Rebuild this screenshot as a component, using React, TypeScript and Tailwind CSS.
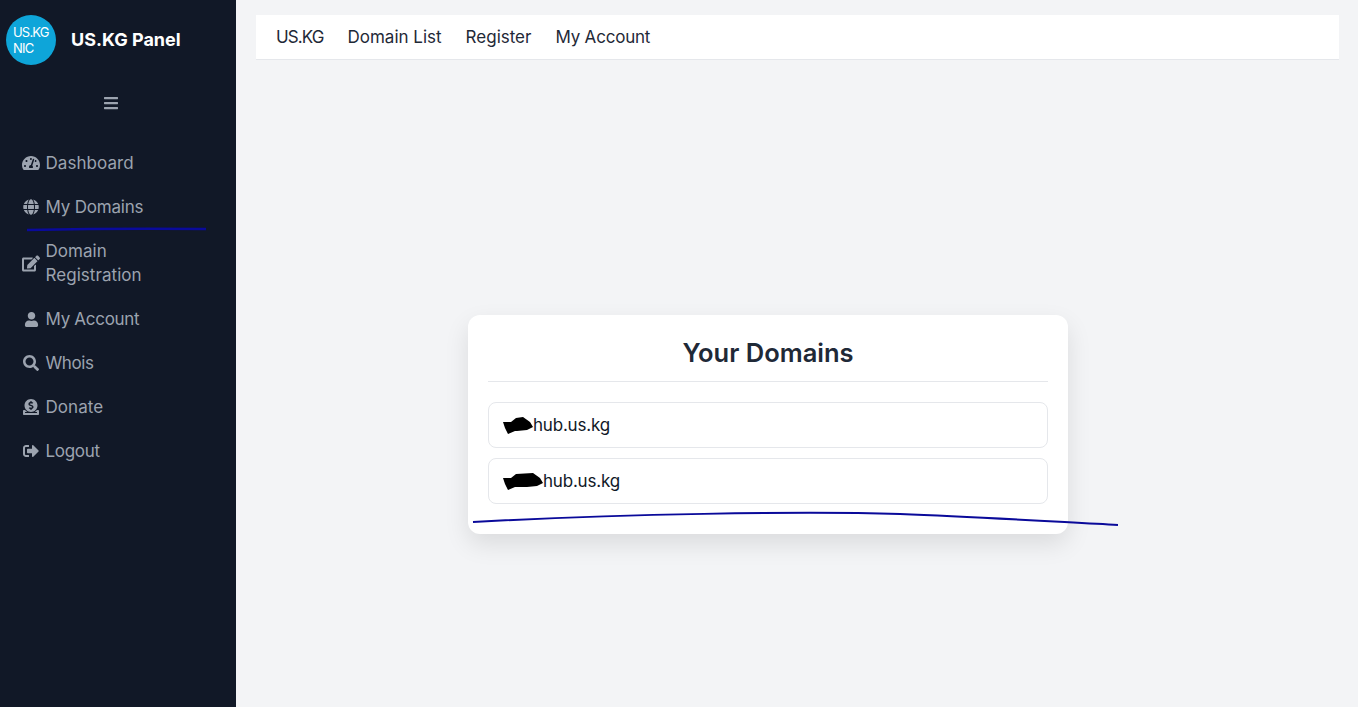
import type { ReactNode } from "react";
import {
  FaBars,
  FaDonate,
  FaEdit,
  FaGlobe,
  FaSearch,
  FaSignOutAlt,
  FaTachometerAlt,
  FaUser,
} from "react-icons/fa";

const MENU: { label: ReactNode; icon: ReactNode; className: string }[] = [
  { label: "Dashboard", icon: <FaTachometerAlt size={18} />, className: "tracking-[0.05px]" },
  { label: "My Domains", icon: <FaGlobe size={16} />, className: "tracking-[-0.2px]" },
  {
    label: (
      <>
        Domain
        <br />
        Registration
      </>
    ),
    icon: <FaEdit size={19} />,
    className: "tracking-[0.05px]",
  },
  { label: "My Account", icon: <FaUser size={15} />, className: "tracking-[-0.3px]" },
  { label: "Whois", icon: <FaSearch size={16} />, className: "tracking-[-0.4px]" },
  { label: "Donate", icon: <FaDonate size={16} />, className: "tracking-[0.05px]" },
  { label: "Logout", icon: <FaSignOutAlt size={16} />, className: "tracking-[-0.3px]" },
];

const TOP_LINKS = [
  { label: "US.KG", className: "tracking-[-0.9px]" },
  { label: "Domain List", className: "" },
  { label: "Register", className: "" },
  { label: "My Account", className: "tracking-[-0.2px]" },
];

function Sidebar() {
  return (
    <aside className="flex h-[707px] w-[236px] shrink-0 flex-col bg-[#111827]">
      <div className="flex items-center gap-[15px] pl-1.5 pt-[15px]">
        <div className="flex h-[50px] w-[50px] items-center rounded-full bg-[#0ea5d9] pl-[7px] text-[13px] leading-4 tracking-[-0.8px] text-white">
          US.KG
          <br />
          NIC
        </div>
        <span className="-translate-y-px text-[18px] font-bold text-white">US.KG Panel</span>
      </div>
      <div className="mt-[30px] flex justify-center pr-[14px] text-[#9ca3af]">
        <FaBars size={16} />
      </div>
      <nav className="mt-10 flex flex-col gap-5 pl-[22px]">
        {MENU.map((item, i) => (
          <div key={i} className={`flex items-center text-[17px] leading-6 text-[#9ca3af] ${item.className}`}>
            <span className="flex w-[18px] justify-center">{item.icon}</span>
            <span className="ml-[5.5px]">{item.label}</span>
          </div>
        ))}
      </nav>
    </aside>
  );
}

function Scribble({ width }: { width: number }) {
  return (
    <svg className="absolute left-[14px] top-[14px]" width={width} height={17} viewBox={`0 0 ${width} 17`}>
      <path
        d={`M0 5 L8 5 L13 1 L${width - 10} 0 L${width - 3} 5 L${width} 10 L${width - 6} 13 L${width - 16} 14 L12 14 L5 17 L2 11 Z`}
        fill="#000"
      />
    </svg>
  );
}

function DomainRow({ name, scribble }: { name: string; scribble: number }) {
  return (
    <div
      className="relative flex h-[46px] items-center rounded-lg border border-[#e5e7eb] bg-white pt-px text-[17px] tracking-[-0.2px] text-[#111827]"
      style={{ paddingLeft: 14 + scribble }}
    >
      {name}
      <Scribble width={scribble} />
    </div>
  );
}

export default function App() {
  return (
    <div className="relative flex h-[707px] w-[1358px] overflow-hidden bg-[#f3f4f6] font-['Inter','Noto_Sans',sans-serif]">
      <Sidebar />
      <main className="flex-1 pl-5 pr-[19px] pt-[15px]">
        <div className="flex h-[45px] items-center gap-6 border-b border-[#e5e7eb] bg-white pl-5 pt-0.5 text-[17px] text-[#1f2937]">
          {TOP_LINKS.map((link) => (
            <span key={link.label} className={link.className}>
              {link.label}
            </span>
          ))}
        </div>
        <div className="flex w-[1024px] justify-center pt-[255px]">
          <div className="h-[219px] w-[600px] rounded-xl bg-white p-5 shadow-[0_10px_25px_rgba(0,0,0,0.1)]">
            <h1 className="border-b border-[#e5e7eb] pt-0.5 pb-3 text-center text-[25.5px] leading-8 font-semibold text-[#1f2937]">
              Your Domains
            </h1>
            <div className="mt-5 flex flex-col gap-[10px]">
              <DomainRow name="hub.us.kg" scribble={30} />
              <DomainRow name="hub.us.kg" scribble={40} />
            </div>
          </div>
        </div>
      </main>

      {/* pen marks drawn over the screenshot */}
      <svg className="pointer-events-none absolute inset-0" width={1358} height={707} fill="none">
        <path d="M27 230 Q120 228 206 229" stroke="#0a0a9a" strokeWidth={2.5} />
        <path
          d="M473 522 C620 514 800 511 900 514 C980 517 1060 522 1118 525"
          stroke="#0a0a9a"
          strokeWidth={2}
        />
      </svg>
    </div>
  );
}
